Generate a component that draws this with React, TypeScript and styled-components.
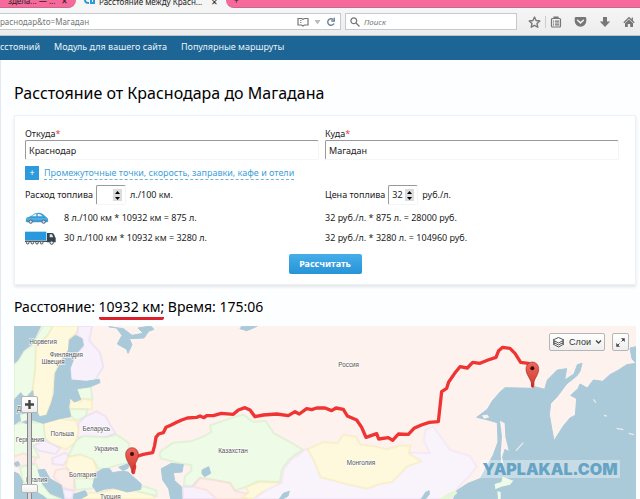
import React, { useState } from "react";
import styled, { createGlobalStyle } from "styled-components";

const GlobalStyle = createGlobalStyle`
  *, *::before, *::after { box-sizing: border-box; }
  body {
    margin: 0;
    background: #fdfeff;
    color: #222;
    font: 9px/12px "Noto Sans", "Open Sans", sans-serif;
  }
  button, input { font: inherit; color: inherit; }
  button { cursor: pointer; }
`;

const Page = styled.div`
  height: 100vh;
  overflow: hidden;
`;

/* ---------- browser chrome ---------- */

const TabStrip = styled.div`
  display: flex;
  height: 8px;
  overflow: hidden;
  background: #f5f5f5;
`;

const Tab = styled.div<{ $active?: boolean; $width?: number }>`
  display: flex;
  align-items: flex-end;
  gap: 3px;
  overflow: hidden;
  padding: 0 8px 0;
  font-size: 8px;
  white-space: nowrap;
  flex: ${(p) => (p.$width ? `0 0 ${p.$width}px` : "1")};
  background: ${(p) => (p.$active ? "#f5f5f5" : "#f7699a")};
  border: solid #c9688c;
  border-width: ${(p) => (p.$active ? "0" : "0 0 1px")};
  border-radius: ${(p) => (p.$active ? "0" : p.$width ? "0 0 8px 0" : "0 0 0 8px")};
  svg { flex: none; }
`;

const TabTitle = styled.span`
  flex: 1;
`;

const Toolbar = styled.div`
  display: flex;
  align-items: center;
  gap: 4px;
  height: 28px;
  padding-right: 5px;
  background: linear-gradient(#f6f6f6, #ececec);
  border-bottom: 1px solid #b9c3ca;
`;

const Field = styled.label<{ $width?: number }>`
  display: flex;
  align-items: center;
  gap: 4px;
  height: 17px;
  min-width: 0;
  flex: ${(p) => (p.$width ? `0 0 ${p.$width}px` : "1")};
  padding: 0 4px;
  background: #fff;
  border: 1px solid #c3cbd0;
`;

const AddressField = styled(Field)`
  padding-left: 0;
  border-left: 0;
  gap: 5px;
`;

const FieldInput = styled.input`
  flex: 1;
  min-width: 0;
  padding: 0;
  border: 0;
  outline: 0;
  background: none;
  font-size: 8px;
  color: #777;
  &::placeholder { color: #777; font-style: italic; opacity: 1; }
`;

const ToolIcons = styled.div`
  display: flex;
  align-items: center;
  gap: 12px;
  padding-left: 7px;
`;

const Divider = styled.span`
  width: 1px;
  height: 12px;
  margin: 0 -8px;
  background: #ccc;
`;

const IconButton = styled.button`
  display: flex;
  padding: 0;
  border: 0;
  background: none;
`;

const NavBar = styled.nav`
  display: flex;
  gap: 14px;
  height: 24px;
  align-items: center;
  padding-bottom: 2px;
  background: #1d6594;
  a { color: #eaf3f9; text-decoration: none; white-space: nowrap; }
`;

/* ---------- page content ---------- */

const Content = styled.main`
  padding: 21px 4px 0 13px;
  border-left: 1px solid #e0e9f0;
`;

const Title = styled.h1`
  margin: 0 0 10px;
  font-size: 16px;
  line-height: 24px;
  font-weight: 400;
  color: #000;
`;

const Panel = styled.form`
  display: flex;
  flex-direction: column;
  padding: 11px 10px 10px;
  background: #fff;
  border: 1px solid #edf1f4;
  box-shadow: 0 2px 3px #e2e6e9;
`;

const Columns = styled.div<{ $top?: number }>`
  display: grid;
  grid-template-columns: 50% 50%;
  margin-top: ${(p) => p.$top ?? 0}px;
`;

const Place = styled.label`
  display: flex;
  flex-direction: column;
  padding-right: 6px;
`;

const Required = styled.span`
  color: #e0433c;
`;

const PlaceName = styled.span`
  line-height: 13px;
`;

const boxBorder = `
  border: 1px solid #f5f5f5;
  border-top-color: #999;
  border-left-color: #999;
  border-radius: 2px;
  background: #fff;
  height: 20px;
`;

const PlaceInput = styled.input`
  ${boxBorder}
  padding: 0 3px;
  outline: 0;
`;

const ExtraRow = styled.div`
  display: flex;
  align-items: center;
  gap: 5px;
  height: 14px;
  margin-top: 6px;
`;

const PlusButton = styled.button`
  width: 14px;
  height: 14px;
  padding: 0;
  border: 0;
  line-height: 14px;
  color: #fff;
  background: #2d9bdb;
`;

const ExtraLink = styled.a`
  color: #3f9fd6;
  text-decoration: none;
  line-height: 13px;
  border-bottom: 1px dashed #6bb5df;
`;

const Amount = styled.div`
  display: flex;
  align-items: center;
  gap: 3px;
`;

const NumberBox = styled.span`
  ${boxBorder}
  display: flex;
  align-items: center;
  width: 30px;
  padding: 0 3px;
  margin-right: 1px;
`;

const NumberInput = styled.input`
  flex: 1;
  min-width: 0;
  width: 10px;
  padding: 0;
  border: 0;
  outline: 0;
  background: none;
  appearance: textfield;
  &::-webkit-inner-spin-button { display: none; }
`;

const Spin = styled.span`
  display: flex;
  flex-direction: column;
`;

const SpinButton = styled.button`
  display: flex;
  align-items: center;
  justify-content: center;
  width: 9px;
  height: 6px;
  padding: 0;
  border: 0;
  background: #dcdcdc;
`;

const Cost = styled.div`
  display: flex;
  align-items: center;
  gap: 8px;
  height: 20px;
  svg { flex: none; }
`;

const Submit = styled.button`
  align-self: center;
  width: 73px;
  height: 20px;
  margin-top: 6px;
  padding: 0;
  border: 0;
  border-radius: 2px;
  font-weight: 700;
  color: #fff;
  background: linear-gradient(#45aeea, #2793d6);
`;

const Result = styled.p`
  margin: 11px 0 6px;
  font-size: 14px;
  line-height: 21px;
  height: 24px;
  color: #000;
`;

const Distance = styled.strong`
  display: inline-block;
  font-weight: 400;
  border-bottom: 3px solid #dd1f2b;
  border-radius: 2px;
`;

/* ---------- map ---------- */

const MapBox = styled.section`
  position: relative;
  height: 173px;
  overflow: hidden;
`;

const MapSvg = styled.svg`
  display: block;
  width: 100%;
  height: 100%;
  font-family: "Liberation Sans", Arial, sans-serif;
`;

const MapTools = styled.div`
  position: absolute;
  top: 7px;
  right: 7px;
  display: flex;
  gap: 7px;
`;

const MapButton = styled.button`
  display: flex;
  align-items: center;
  justify-content: center;
  gap: 4px;
  height: 18px;
  min-width: 17px;
  padding: 0 2px;
  font: 9px/12px "Liberation Sans", Arial, sans-serif;
  color: #333;
  background: linear-gradient(#fff, #eee);
  border: 1px solid #b5b5b5;
  border-radius: 2px;
`;

const Zoom = styled.div`
  position: absolute;
  top: 70px;
  left: 7px;
  display: flex;
  flex-direction: column;
  align-items: center;
  width: 17px;
`;

const ZoomButton = styled(MapButton)`
  height: 17px;
  width: 17px;
  padding: 0;
`;

const ZoomRange = styled.input`
  appearance: none;
  writing-mode: vertical-lr;
  width: 17px;
  height: 150px;
  margin: 0;
  background: linear-gradient(90deg, transparent 6px, #888 6px, #888 7px, #d5d9da 7px, #d5d9da 10px, #888 10px, #888 11px, transparent 11px);
  &::-webkit-slider-thumb {
    appearance: none;
    width: 17px;
    height: 9px;
    background: linear-gradient(#fff, #eee);
    border: 1px solid #b5b5b5;
    border-radius: 2px;
  }
`;

const Watermark = styled.div`
  position: absolute;
  right: 16px;
  bottom: 21px;
  width: 140px;
  height: 18px;
  font: 900 16px/18px Inter, "Liberation Sans", sans-serif;
  text-align: center;
  color: #66a4c5;
  background: rgba(255, 255, 255, 0.35);
`;

const countries: { d: string; fill: string; edge: string }[] = [
  { fill: "#eefbe6", edge: "#d3edc8", d: "M130 18 L112 45 98 75 72 92 54 122 42 132 42 240 62 222 75 236 98 212 106 150 108 80 140 50 160 18Z" },
  { fill: "#fef8dd", edge: "#f5e9b8", d: "M160 18 L140 50 108 80 106 150 98 212 106 262 118 292 138 286 152 250 160 222 164 160 184 120 206 90 208 58 232 36 235 18Z" },
  { fill: "#f8f1fc", edge: "#e6d8ef", d: "M235 18 L232 45 248 58 250 80 225 104 210 145 213 180 258 186 284 182 310 140 300 98 268 62 276 18Z" },
  { fill: "#eefbe6", edge: "#d3edc8", d: "M228 206 L272 200 278 238 240 238Z" },
  { fill: "#fef8dd", edge: "#f5e9b8", d: "M208 250 L224 240 240 246 250 236 276 242 276 268 210 266Z" },
  { fill: "#eefbe6", edge: "#d3edc8", d: "M208 268 L262 268 258 290 230 302 212 288Z" },
  { fill: "#f8f1fc", edge: "#e6d8ef", d: "M258 288 L290 274 318 290 334 320 346 340 316 352 232 352 236 308Z" },
  { fill: "#fef8dd", edge: "#f5e9b8", d: "M130 308 L180 296 228 302 236 330 228 366 200 388 152 372 134 352Z" },
  { fill: "#eefbe6", edge: "#d3edc8", d: "M42 312 L84 306 130 308 136 360 100 378 118 412 42 420Z" },
  { fill: "#f8f1fc", edge: "#e6d8ef", d: "M100 378 L136 362 180 384 168 402 118 392Z" },
  { fill: "#feefeb", edge: "#f5d9d2", d: "M42 410 L70 400 108 414 100 432 60 440 42 436Z" },
  { fill: "#eefbe6", edge: "#d3edc8", d: "M60 440 L108 432 116 450 128 492 150 522 190 537 140 537 98 510 68 484Z" },
  { fill: "#f8f1fc", edge: "#e6d8ef", d: "M156 416 L196 398 210 410 190 436 158 432Z" },
  { fill: "#eefbe6", edge: "#d3edc8", d: "M228 362 L250 348 316 352 350 344 388 370 382 410 384 430 350 436 320 446 296 446 280 420 240 404 204 410Z" },
  { fill: "#fef8dd", edge: "#f5e9b8", d: "M204 412 L240 404 278 418 290 448 278 476 224 470 198 440Z" },
  { fill: "#eefbe6", edge: "#d3edc8", d: "M222 474 L280 476 284 504 228 510Z" },
  { fill: "#feefeb", edge: "#f5d9d2", d: "M168 450 L200 444 222 474 222 512 190 504 160 470Z" },
  { fill: "#f8f1fc", edge: "#e6d8ef", d: "M186 506 L222 512 216 537 196 537Z" },
  { fill: "#fef8dd", edge: "#f5e9b8", d: "M240 537 L250 518 300 518 345 506 420 516 460 520 464 537Z" },
  { fill: "#eefbe6", edge: "#d3edc8", d: "M400 500 L436 500 470 512 470 528 420 516Z" },
  { fill: "#eefbe6", edge: "#d3edc8", d: "M484 392 L520 368 572 364 610 350 634 336 630 316 700 292 730 284 760 306 796 302 822 340 870 366 910 390 888 402 866 420 845 450 840 486 772 484 740 500 705 512 690 488 630 478 600 474 576 500 552 496 555 468 574 452 574 436 540 430 516 424 484 416 478 404Z" },
  { fill: "#f8f1fc", edge: "#e6d8ef", d: "M548 500 L576 500 600 474 628 500 660 537 548 537Z" },
  { fill: "#feefeb", edge: "#f5d9d2", d: "M580 500 L600 474 640 480 690 490 706 514 746 522 740 537 650 537 620 510Z" },
  { fill: "#fef8dd", edge: "#f5e9b8", d: "M738 502 L776 486 840 488 820 506 782 518 762 537 726 532 746 518Z" },
  { fill: "#f9f3fc", edge: "#eee3f4", d: "M915 388 L1290 400 1272 362 1276 330 1300 320 1322 350 1350 390 1410 408 1430 440 1406 470 1380 496 1350 537 762 537 800 510 846 488 850 450 872 420 900 402Z" },
  { fill: "#fef8dd", edge: "#f5e9b8", d: "M922 388 L970 366 1012 370 1030 344 1066 350 1082 374 1120 378 1160 388 1196 378 1232 376 1226 400 1264 424 1220 440 1200 462 1176 486 1140 492 1102 506 1030 490 962 472 940 418Z" },
];

const waters = [
  "M42 18 L122 18 110 42 96 72 70 92 52 122 42 130Z",
  "M42 240 L62 218 76 236 98 212 104 262 118 290 140 286 154 250 162 222 166 160 186 120 206 90 208 60 226 46 246 56 250 76 226 104 210 145 213 180 258 184 298 178 300 188 272 200 230 206 242 238 224 246 210 234 206 262 212 290 178 296 130 310 98 300 82 312 60 302 42 314Z",
  "M326 20 L350 24 366 46 352 72 380 88 384 100 396 74 388 56 432 54 446 34 462 28 452 18 414 24 430 40 396 46 370 26Z",
  "M720 26 L740 32 760 24 772 18 750 20 726 18Z",
  "M288 458 L310 446 328 446 338 458 364 454 384 456 406 476 424 492 422 508 382 516 340 504 312 508 290 516 278 498Z",
  "M356 442 L388 430 384 444 370 452Z",
  "M484 446 L514 430 550 434 546 456 520 458 524 482 544 500 546 537 512 537 506 506 488 480Z",
  "M606 450 L626 440 632 460 614 470 606 462Z",
  "M42 456 L56 462 68 484 66 537 42 537Z",
  "M114 450 L134 448 150 476 184 496 192 537 150 520 128 492Z",
  "M68 500 L98 510 130 528 140 537 66 537Z",
  "M222 522 L256 512 262 526 240 537 220 537Z",
  "M1515 203 L1595 205 1604 200 1634 208 1642 180 1672 150 1700 146 1694 180 1722 162 1732 134 1746 130 1740 154 1730 168 1700 192 1670 232 1652 250 1648 284 1656 330 1662 362 1690 318 1710 294 1726 286 1730 236 1712 226 1734 206 1740 192 1762 204 1780 180 1808 184 1830 164 1856 150 1880 134 1908 130 1908 537 1360 537 1370 512 1404 490 1440 476 1466 430 1480 404 1494 366 1492 308 1464 300 1430 292 1462 268 1476 244 1500 216Z",
  "M1890 84 L1908 80 1908 130 1896 116Z",
  "M838 537 L850 520 868 514 864 528 848 537Z",
  "M42 430 L54 424 60 434 48 440Z",
];

const islands: { d: string; fill: string }[] = [
  { fill: "#fdf2ee", d: "M1500 302 L1514 310 1516 350 1526 392 1514 386 1506 412 1512 438 1504 440 1502 400 1506 350Z" },
  { fill: "#eefbe6", d: "M1484 492 L1504 486 1508 470 1540 482 1530 494 1504 500 1486 508Z" },
  { fill: "#eefbe6", d: "M1492 514 L1502 516 1502 537 1494 537Z" },
  { fill: "#e4f5d8", d: "M1320 537 L1344 520 1366 510 1372 520 1350 537Z" },
  { fill: "#fdf2ee", d: "M1446 286 L1462 284 1468 292 1452 296Z" },
  { fill: "#abcad9", d: "M1262 537 L1276 516 1288 510 1290 522 1278 537Z" },
  { fill: "#eefbe6", d: "M60 284 L80 280 82 300 64 306Z" },
];

const route =
  "M400 458 L404 440 398 420 414 408 430 403 458 398 464 376 468 352 476 342 490 338 498 322 512 316 530 307 545 300 562 294 590 292 600 288 612 293 620 287 640 287 664 280 700 283 715 270 735 263 750 270 765 290 790 285 830 282 865 287 885 275 898 282 920 266 935 269 950 264 975 264 995 272 1008 264 1030 268 1042 288 1070 300 1085 322 1098 352 1130 341 1136 357 1165 353 1178 361 1195 342 1225 343 1242 325 1264 315 1288 307 1315 305 1320 260 1325 215 1340 205 1346 186 1364 160 1380 140 1402 144 1418 127 1440 130 1464 120 1488 112 1496 92 1508 82 1530 85 1545 100 1562 127 1585 130 1598 150 1598 198";

const labels: [string, number, number][] = [
  ["Норвегия", 129, 66],
  ["Финляндия", 199, 105],
  ["Швеция", 159, 126],
  ["Дания", 78, 267],
  ["Германия", 90, 360],
  ["Польша", 187, 342],
  ["Беларусь", 289, 328],
  ["Украина", 318, 388],
  ["Болгария", 248, 466],
  ["Италия", 110, 481],
  ["Турция", 331, 530],
  ["Казахстан", 699, 393],
  ["Россия", 1046, 135],
  ["Монголия", 1083, 430],
];

function Pin({ x, y }: { x: number; y: number }) {
  return (
    <g transform={`translate(${x} ${y})`}>
      <path d="M0 56 C-3 30 -19 22 -19 1 A19 20 0 1 1 19 1 C19 22 4 30 0 56Z" fill="url(#pin)" stroke="#9c2f28" strokeWidth="2" />
      <circle r="6" fill="#3c0d0b" />
    </g>
  );
}

function RouteMap() {
  return (
    <MapSvg viewBox="42 18 1866 519" preserveAspectRatio="xMidYMin slice" role="img" aria-label="Карта маршрута">
      <defs>
        <linearGradient id="pin" x1="0" y1="0" x2="0" y2="1">
          <stop offset="0" stopColor="#f0665c" />
          <stop offset="1" stopColor="#cf3a30" />
        </linearGradient>
      </defs>
      <rect x="42" y="18" width="1866" height="519" fill="#fdf2ee" />
      {countries.map((c, i) => (
        <path key={i} d={c.d} fill={c.fill} stroke={c.edge} strokeWidth="6" strokeOpacity="0.55" strokeLinejoin="round" />
      ))}
      {waters.map((d, i) => (
        <path key={i} d={d} fill="#abcad9" stroke="#abcad9" strokeWidth="3" strokeLinejoin="round" />
      ))}
      {islands.map((c, i) => (
        <path key={i} d={c.d} fill={c.fill} />
      ))}
      <path d="M1548 392 L1570 368 M1780 238 l8 10 M1812 286 l8 2 M1850 325 l20 4 M1886 340 l16 4" stroke="#e6edf0" strokeWidth="4" />
      <g fontSize="19" fill="#555" stroke="#fff" strokeWidth="4" strokeOpacity="0.8" paintOrder="stroke" textAnchor="middle">
        {labels.map(([t, x, y]) => (
          <text key={t} x={x} y={y + 6}>{t}</text>
        ))}
      </g>
      <path d={route} fill="none" stroke="#f03434" strokeWidth="10" strokeLinejoin="round" strokeLinecap="round" />
      <Pin x={396} y={402} />
      <Pin x={1597} y={145} />
    </MapSvg>
  );
}

/* ---------- icons ---------- */

const gray = "#777";

const BookIcon = () => (
  <svg width="12" height="10" viewBox="0 0 12 10" fill="none" stroke={gray} strokeWidth="1.2">
    <path d="M1 1.5h3.5L6 2.3l1.500-.8H11v6.500H7.500L6 9 4.500 8H1z" />
    <path d="M3 3.500h1.500M3 5.500h1.500" strokeWidth=".8" />
  </svg>
);
const DropIcon = () => (
  <svg width="7" height="6" viewBox="0 0 7 6"><path d="M.5 1h6L3.500 5.500z" fill="#bbb" /></svg>
);
const ReloadIcon = () => (
  <svg width="10" height="10" viewBox="0 0 10 10" fill="none" stroke="#6d8294" strokeWidth="1.400">
    <path d="M8 6.500A3.300 3.300 0 1 1 7.300 2.600" /><path d="M8.300.8v3.200H5.200" />
  </svg>
);
const SearchIcon = () => (
  <svg width="10" height="10" viewBox="0 0 10 10" fill="none" stroke={gray} strokeWidth="1.300">
    <circle cx="3.800" cy="3.800" r="2.900" /><path d="M6 6l3.500 3.500" />
  </svg>
);
const StarIcon = () => (
  <svg width="13" height="12" viewBox="0 0 24 23" fill="none" stroke={gray} strokeWidth="2.600" strokeLinejoin="round">
    <path d="M12 2l3 6.700 7.200.8-5.400 4.900 1.500 7.100L12 17.900 5.700 21.500l1.500-7.100L1.800 9.500 9 8.700z" />
  </svg>
);
const ListIcon = () => (
  <svg width="12" height="12" viewBox="0 0 12 12" fill="none" stroke={gray} strokeWidth="1.200">
    <rect x="1.500" y="2.500" width="9" height="8.500" rx="1" /><path d="M4 1h4v1.500H4z" fill={gray} />
    <path d="M3 5.200h1M5 5.200h4.200M3 7h1M5 7h4.200M3 8.900h1M5 8.900h4.200" />
  </svg>
);
const PocketIcon = () => (
  <svg width="13" height="12" viewBox="0 0 13 12">
    <path d="M2 1h9q1.300 0 1.300 1.300V5A5.800 5.800 0 0 1 .7 5V2.300Q.7 1 2 1z" fill={gray} />
    <path d="M3.600 4.200l2.900 2.700 2.900-2.700" fill="none" stroke="#f3f3f3" strokeWidth="1.500" strokeLinecap="round" />
  </svg>
);
const DownIcon = () => (
  <svg width="12" height="12" viewBox="0 0 12 12"><path d="M4 1h4v4.500h3.200L6 11 .8 5.500H4z" fill={gray} /></svg>
);
const HomeIcon = () => (
  <svg width="12" height="12" viewBox="0 0 12 12">
    <path d="M6 3.500l4 3.800V11H7.200V8H4.800v3H2V7.300z" fill={gray} />
    <path d="M.8 6.700L6 1.700l5.200 5M9.300 1.500v3" fill="none" stroke={gray} strokeWidth="1.300" />
  </svg>
);
const LogoIcon = () => (
  <svg width="12" height="8" viewBox="0 0 12 8">
    <path d="M1 0q0 3 4 3M7 0v3h3V0" fill="none" stroke="#2d9bdb" strokeWidth="2" />
  </svg>
);
const CarIcon = () => (
  <svg width="31" height="14" viewBox="0 0 93 42">
    <path d="M2 31 L4 20 18 15 Q28 5 40 5 Q52 5 60 15 L68 22 70 31 66 34 6 34Z" fill="#3a9bd6" />
    <path d="M20 16q7-8 14-8v8zM38 8q10 0 15 8H38z" fill="#e3f3fc" />
    <path d="M5 24h60" stroke="#91cdf0" strokeWidth="2" />
    <g fill="#ddd" stroke="#4b6474" strokeWidth="3"><circle cx="17" cy="32" r="5" /><circle cx="56" cy="32" r="5" /></g>
  </svg>
);
const TruckIcon = () => (
  <svg width="31" height="14" viewBox="0 0 93 42">
    <path d="M0 2h64v26H0z" fill="#2799dc" />
    <path d="M68 6h13q6 0 9 12l2 2v14H66V6z" fill="#36424b" />
    <path d="M74 10h7l4 9H74z" fill="#dce6ec" />
    <path d="M0 29h66v4H0z" fill="#46535c" />
    <g fill="#eee" stroke="#46535c" strokeWidth="3">
      <circle cx="8" cy="35" r="4" /><circle cx="22" cy="35" r="4" /><circle cx="36" cy="35" r="4" /><circle cx="50" cy="35" r="4" /><circle cx="80" cy="35" r="5" />
    </g>
  </svg>
);
const LayersIcon = () => (
  <svg width="13" height="12" viewBox="0 0 13 12" fill="#fff" stroke="#555" strokeWidth="1" strokeLinejoin="round">
    <path d="M1 8l5.500 3L12 8 6.500 5.500z" /><path d="M1 6l5.500 3L12 6 6.500 3.500z" /><path d="M1 4l5.500 3L12 4 6.500 1.500z" />
  </svg>
);
const ChevronIcon = () => (
  <svg width="7" height="6" viewBox="0 0 7 6" fill="none" stroke="#444" strokeWidth="1.300"><path d="M1 1.500l2.500 2.500L6 1.500" /></svg>
);
const ExpandIcon = () => (
  <svg width="11" height="11" viewBox="0 0 11 11" fill="#444" stroke="#444">
    <path d="M6.500 4.500l2-2M4.500 6.500l-2 2" /><path d="M6.500 1.500h3v3zM1.500 6.500v3h3z" strokeWidth=".5" />
  </svg>
);
const PlusIcon = () => (
  <svg width="11" height="11" viewBox="0 0 11 11" stroke="#444" strokeWidth="2.400"><path d="M5.500 1v9M1 5.500h9" /></svg>
);

interface AmountProps {
  id: string;
  label: string;
  unit: string;
  initial: string;
}

function AmountField({ id, label, unit, initial }: AmountProps) {
  const [value, setValue] = useState(initial);
  const step = (by: number) => setValue(String(Math.max(0, Number(value) + by)));
  return (
    <Amount>
      <label htmlFor={id}>{label}</label>
      <NumberBox>
        <NumberInput id={id} type="number" value={value} onChange={(e) => setValue(e.target.value)} />
        <Spin>
          <SpinButton type="button" aria-label="Больше" onClick={() => step(1)}>
            <svg width="5" height="3" viewBox="0 0 5 3"><path d="M0 3L2.500 0 5 3z" /></svg>
          </SpinButton>
          <SpinButton type="button" aria-label="Меньше" onClick={() => step(-1)}>
            <svg width="5" height="3" viewBox="0 0 5 3"><path d="M0 0l2.500 3L5 0z" /></svg>
          </SpinButton>
        </Spin>
      </NumberBox>
      <span>{unit}</span>
    </Amount>
  );
}

export default function App() {
  return (
    <Page>
      <GlobalStyle />
      <TabStrip>
        <Tab $width={76}>
          <TabTitle>здела... — ...</TabTitle>
          <span>✕</span>
        </Tab>
        <Tab $active $width={150}>
          <LogoIcon />
          <TabTitle>Расстояние между Красн...</TabTitle>
          <span>✕</span>
        </Tab>
        <Tab>
          <span>+</span>
        </Tab>
      </TabStrip>
      <Toolbar>
        <AddressField>
          <FieldInput aria-label="Адрес" defaultValue="раснодар&to=Магадан" />
          <BookIcon />
          <DropIcon />
          <ReloadIcon />
        </AddressField>
        <Field $width={172}>
          <SearchIcon />
          <FieldInput aria-label="Поиск" placeholder="Поиск" />
        </Field>
        <ToolIcons>
          <IconButton aria-label="Закладка"><StarIcon /></IconButton>
          <Divider />
          <IconButton aria-label="Список"><ListIcon /></IconButton>
          <IconButton aria-label="Pocket"><PocketIcon /></IconButton>
          <IconButton aria-label="Загрузки"><DownIcon /></IconButton>
          <IconButton aria-label="Домой"><HomeIcon /></IconButton>
        </ToolIcons>
      </Toolbar>
      <NavBar>
        <a href="#distances">сстояний</a>
        <a href="#module">Модуль для вашего сайта</a>
        <a href="#routes">Популярные маршруты</a>
      </NavBar>
      <Content>
        <Title>Расстояние от Краснодара до Магадана</Title>
        <Panel onSubmit={(e) => e.preventDefault()}>
          <Columns>
            <Place>
              <PlaceName>Откуда<Required>*</Required></PlaceName>
              <PlaceInput defaultValue="Краснодар" />
            </Place>
            <Place>
              <PlaceName>Куда<Required>*</Required></PlaceName>
              <PlaceInput defaultValue="Магадан" />
            </Place>
          </Columns>
          <ExtraRow>
            <PlusButton type="button" aria-label="Добавить">+</PlusButton>
            <ExtraLink href="#extra">Промежуточные точки, скорость, заправки, кафе и отели</ExtraLink>
          </ExtraRow>
          <Columns $top={5}>
            <AmountField id="usage" label="Расход топлива" unit="л./100 км." initial="" />
            <AmountField id="price" label="Цена топлива" unit="руб./л." initial="32" />
          </Columns>
          <Columns $top={3}>
            <Cost><CarIcon />8 л./100 км * 10932 км = 875 л.</Cost>
            <Cost>32 руб./л. * 875 л. = 28000 руб.</Cost>
            <Cost><TruckIcon />30 л./100 км * 10932 км = 3280 л.</Cost>
            <Cost>32 руб./л. * 3280 л. = 104960 руб.</Cost>
          </Columns>
          <Submit>Рассчитать</Submit>
        </Panel>
        <Result>
          Расстояние: <Distance>10932 км;</Distance> Время: 175:06
        </Result>
        <MapBox>
          <RouteMap />
          <Zoom>
            <ZoomButton aria-label="Приблизить"><PlusIcon /></ZoomButton>
            <ZoomRange type="range" aria-label="Масштаб" min={0} max={100} defaultValue={50} />
          </Zoom>
          <MapTools>
            <MapButton><LayersIcon />Слои<ChevronIcon /></MapButton>
            <MapButton aria-label="Во весь экран"><ExpandIcon /></MapButton>
          </MapTools>
          <Watermark>YAPLAKAL.COM</Watermark>
        </MapBox>
      </Content>
    </Page>
  );
}
